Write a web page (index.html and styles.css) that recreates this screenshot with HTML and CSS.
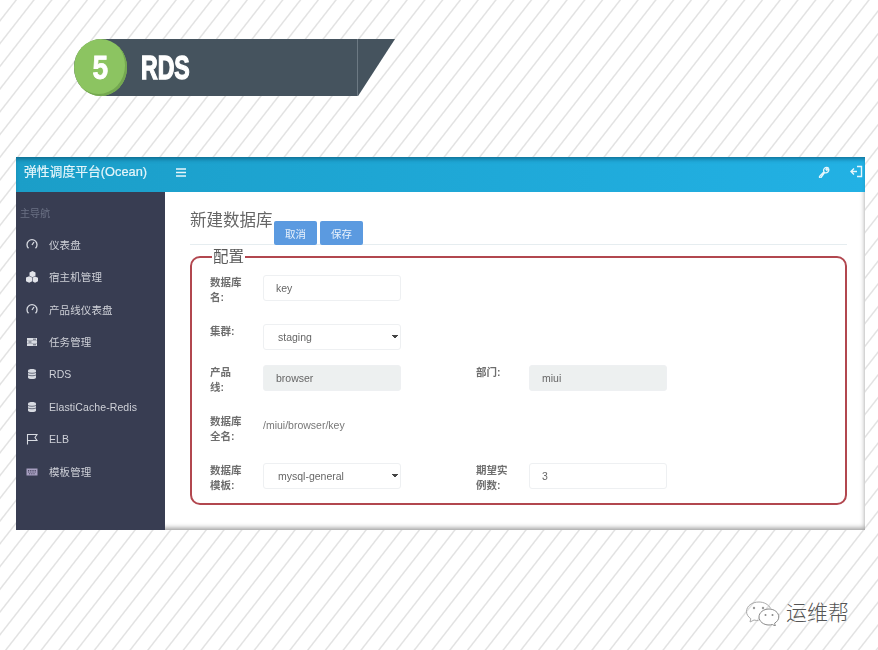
FILE: index.html
```html
<!DOCTYPE html>
<html lang="zh-CN">
<head>
    <meta charset="UTF-8">
    <title>RDS</title>
    <link rel="stylesheet" href="styles.css">
</head>
<body>

<div class="banner">
    <div class="banner-num"><span>5</span></div>
    <div class="banner-title"><span>RDS</span></div>
</div>

<div class="window">
    <header class="topbar">
        <span class="brand">弹性调度平台(Ocean)</span>
        <svg class="burger" width="10" height="9" viewBox="0 0 10 9"><path d="M0 1h10M0 4.500h10M0 8h10" stroke="#e8f6fb" stroke-width="1.500"/></svg>
        <div class="topbar-right">
            <svg width="13" height="13" viewBox="0 0 13 13"><path d="M1.500 11.500 6 6.800a3 3 0 0 1 3.800-4.200L8 4.400l.8 1 1.800-1.600a3 3 0 0 1-4 3.800l-3.600 4.900a1 1 0 0 1-1.500 0z" fill="none" stroke="#e6f6fb" stroke-width="1.300"/></svg>
            <svg width="13" height="13" viewBox="0 0 13 13"><path d="M7 1.500h4.500v10H7M1 6.500h6M4 3.500 1 6.500l3 3" fill="none" stroke="#e6f6fb" stroke-width="1.400"/></svg>
        </div>
    </header>
    <div class="window-body">
        <nav class="sidebar">
            <div class="nav-head">主导航</div>
            <a class="nav-item">
                <svg viewBox="0 0 12 12"><path d="M2.500 10.200a5 5 0 1 1 7 0M6 7l2-3" fill="none" stroke="#d8dbe2" stroke-width="1.300"/></svg>仪表盘
            </a>
            <a class="nav-item">
                <svg viewBox="0 0 12 12"><path d="M6.500 0l3 1.400v3.400l-3 1.400-3-1.400V1.400zM3.200 5.200l3 1.400v3.600l-3 1.500-3.200-1.500V6.600zM9 5.600l3 1.200v3.400l-3 1.500-2.200-1.300V6.600z" fill="#e2e4ea"/></svg>宿主机管理
            </a>
            <a class="nav-item">
                <svg viewBox="0 0 12 12"><path d="M2.500 10.200a5 5 0 1 1 7 0M6 7l2-3" fill="none" stroke="#d8dbe2" stroke-width="1.300"/></svg>产品线仪表盘
            </a>
            <a class="nav-item">
                <svg viewBox="0 0 12 12"><path d="M1 2h10v2.400H1zM1 4.800h10v2.400H1zM1 7.600h10V10H1z" fill="#d8dbe2"/><path d="M7 3.200h3M2.500 6h3M7 8.800h3" stroke="#383d52" stroke-width=".8"/></svg>任务管理
            </a>
            <a class="nav-item">
                <svg viewBox="0 0 12 12"><path d="M2 2.500c0-2 8-2 8 0v7c0 2-8 2-8 0z" fill="#d8dbe2"/><path d="M2 4.500c2 1 6 1 8 0M2 7c2 1 6 1 8 0" fill="none" stroke="#383d52" stroke-width=".7"/></svg>RDS
            </a>
            <a class="nav-item">
                <svg viewBox="0 0 12 12"><path d="M2 2.500c0-2 8-2 8 0v7c0 2-8 2-8 0z" fill="#d8dbe2"/><path d="M2 4.500c2 1 6 1 8 0M2 7c2 1 6 1 8 0" fill="none" stroke="#383d52" stroke-width=".7"/></svg>ElastiCache-Redis
            </a>
            <a class="nav-item">
                <svg viewBox="0 0 12 12"><path d="M1.500 11.500V1.500h9.500L9 4.500l2 3H1.500" fill="none" stroke="#d8dbe2" stroke-width="1.100"/></svg>ELB
            </a>
            <a class="nav-item">
                <svg viewBox="0 0 12 12"><path d="M.5 2.500h11v7H.5z" fill="#a79fc0"/><path d="M2 4.500h8M2 6h8M3 7.800h6" stroke="#4a4763" stroke-dasharray="1 .8"/></svg>模板管理
            </a>
        </nav>
        <main class="content">
            <div class="page-head">
                <h1>新建数据库</h1>
                <button class="btn" type="button">取消</button>
                <button class="btn" type="button">保存</button>
            </div>
            <fieldset class="config">
                <legend>配置</legend>
                <form class="config-grid">
                    <label class="field-label">数据库名:</label>
                    <input class="field" type="text" value="key">

                    <label class="field-label">集群:</label>
                    <select class="field field-select"><option>staging</option></select>

                    <label class="field-label">产品线:</label>
                    <input class="field field-off" type="text" value="browser" disabled>
                    <label class="field-label field-label-right">部门:</label>
                    <input class="field field-off" type="text" value="miui" disabled>

                    <label class="field-label">数据库全名:</label>
                    <div class="field-static">/miui/browser/key</div>

                    <label class="field-label">数据库模板:</label>
                    <select class="field field-select"><option>mysql-general</option></select>
                    <label class="field-label field-label-right">期望实例数:</label>
                    <input class="field" type="text" value="3">
                </form>
            </fieldset>
        </main>
    </div>
</div>

<footer class="footer">
    <svg width="35" height="26" viewBox="0 0 35 26">
        <path d="M14 2C7 2 1.500 6 1.500 11.500c0 3 1.800 5.500 4.300 7.200L5 22l4-2c1.500.4 3 .6 4.500.6" fill="none" stroke="#aaa" stroke-width="1"/>
        <path d="M14 2c5 0 9.500 2.500 11.500 6.300" fill="none" stroke="#aaa" stroke-width="1"/>
        <path d="M24 9c-5.500 0-10 3.600-10 8s4.500 8 10 8c1.200 0 2.300-.2 3.300-.5l3 1.500-.7-2.800c2.500-1.500 4.200-3.800 4.200-6.200 0-4.400-4.500-8-9.800-8z" fill="#fff" stroke="#888" stroke-width="1"/>
        <circle cx="9" cy="8" r="1.200" fill="#999"/><circle cx="18" cy="8" r="1.200" fill="#999"/>
        <circle cx="20.500" cy="15" r="1" fill="#888"/><circle cx="27.500" cy="15" r="1" fill="#888"/>
    </svg>
    <span class="footer-name">运维帮</span>
</footer>

</body>
</html>
```

FILE: styles.css
```css
body {
    margin: 0;
    width: 878px;
    height: 650px;
    overflow: hidden;
    font-family: "Liberation Sans", "Noto Sans CJK SC", sans-serif;
    background-color: #fff;
    background-image: repeating-linear-gradient(128deg, #fff 0, #fff 11.500px, #e2e2e2 12.500px, #e2e2e2 13px, #fff 14px);
}

/* section banner */
.banner {
    display: flex;
    align-items: center;
    width: 321px;
    height: 57px;
    margin: 39px 0 0 74px;
    background: #45535e;
    clip-path: polygon(0 0, 100% 0, 88.500% 100%, 0 100%);
    border-radius: 28px 0 0 28px;
}
.banner-num {
    width: 53px;
    height: 57px;
    flex: none;
    border-radius: 50%;
    background: #8cc461;
    box-shadow: inset -2px -2px 0 #74a850;
    color: #fff;
    font: bold 33px/57px "Liberation Sans", sans-serif;
    text-align: center;
}
.banner-num span {
    display: inline-block;
    transform: scaleX(0.85);
    -webkit-text-stroke: 0.8px #fff;
}
.banner-title {
    width: 216px;
    height: 57px;
    flex: none;
    margin-left: 14px;
    border-right: 1px solid #6c7983;
    color: #fff;
    font: bold 33px/57px "Liberation Sans", sans-serif;
}
.banner-title span {
    display: inline-block;
    transform: scaleX(0.7);
    transform-origin: left center;
    -webkit-text-stroke: 1.400px #fff;
}

/* app window */
.window {
    width: 849px;
    height: 373px;
    margin: 61px 0 0 16px;
    display: flex;
    flex-direction: column;
    background: #fff;
    filter: blur(0.5px);
}
.topbar {
    height: 35px;
    flex: none;
    display: flex;
    align-items: center;
    padding: 0 2px 5px 8px;
    box-sizing: border-box;
    background: linear-gradient(90deg, #1b9ec8, #22b1e4);
    box-shadow: inset 0 4px 4px -2px rgba(0, 60, 90, 0.55);
    color: #e4f5fa;
}
.brand {
    width: 152px;
    margin-top: -3px;
    font-size: 12.800px;
    -webkit-text-stroke: 0.2px #e4f5fa;
}
.topbar-right {
    margin-left: auto;
    margin-top: -1px;
    display: flex;
    gap: 19px;
}
.window-body {
    flex: 1;
    display: flex;
    min-height: 0;
}

/* sidebar */
.sidebar {
    width: 149px;
    flex: none;
    background: #383d52;
    color: #cfd1d8;
    font-size: 10.500px;
    letter-spacing: 0.1px;
}
.nav-head {
    padding: 15px 0 0 4px;
    height: 21px;
    font-size: 10px;
    line-height: 13px;
    color: #6a7084;
}
.nav-item {
    display: flex;
    align-items: center;
    height: 32.500px;
    padding-left: 10px;
}
.nav-item svg {
    width: 12px;
    height: 12px;
    margin-right: 11px;
    flex: none;
}

/* main */
.content {
    flex: 1;
    padding: 16px 18px 0 25px;
    box-shadow: inset -3px -5px 5px -3px rgba(0, 0, 0, 0.4);
    color: #666;
}
.page-head {
    display: flex;
    height: 36px;
    border-bottom: 1px solid #e6edf0;
}
.page-head h1 {
    width: 84px;
    margin: 0;
    font-size: 16.500px;
    font-weight: normal;
    line-height: 24px;
    white-space: nowrap;
    color: #666;
}
.btn {
    width: 43px;
    height: 24px;
    margin: 13px 3px 0 0;
    padding: 0;
    border: none;
    border-radius: 2px;
    background: #5b9ae0;
    color: #e9f2fc;
    font: 10.500px "Liberation Sans", "Noto Sans CJK SC", sans-serif;
}
.config {
    margin: 2px 0 0;
    padding: 8px 0 6px 18px;
    border: 2px solid #b2474f;
    border-radius: 10px;
    min-width: 0;
}
.config legend {
    margin-left: 2px;
    padding: 0 1px;
    font-size: 15.500px;
    line-height: 20px;
    color: #5a5a5a;
}
.config-grid {
    display: grid;
    grid-template-columns: 53px 138px 75px 53px 138px;
    grid-template-rows: 34px 26px 34px 34px 34px;
    row-gap: 15px;
    align-items: start;
}
.field-label {
    grid-column: 1;
    width: 33px;
    font-size: 10.500px;
    font-weight: bold;
    line-height: 15px;
    color: #6e6e6e;
}
.field-label-right {
    grid-column: 4;
}
.field {
    width: 138px;
    height: 26px;
    box-sizing: border-box;
    padding: 0 12px;
    border: 1px solid #eef0f2;
    border-radius: 3px;
    background: #fff;
    color: #666;
    font: 10.500px "Liberation Sans", "Noto Sans CJK SC", sans-serif;
}
.field-select {
    appearance: none;
    padding-left: 14px;
    background-image: linear-gradient(45deg, transparent 50%, #444 50%), linear-gradient(315deg, transparent 50%, #444 50%);
    background-size: 3px 4px;
    background-position: 128px 10px, 131px 10px;
    background-repeat: no-repeat;
}
.field-off {
    background: #edf0f0;
}
.field-static {
    padding-top: 4px;
    font-size: 10.500px;
    line-height: 15px;
    color: #777;
}

/* footer mark */
.footer {
    display: flex;
    align-items: center;
    justify-content: flex-end;
    gap: 6px;
    margin: 70px 29px 0 0;
}
.footer-name {
    font-size: 21px;
    font-weight: 300;
    line-height: 26px;
    color: #555;
}
```
